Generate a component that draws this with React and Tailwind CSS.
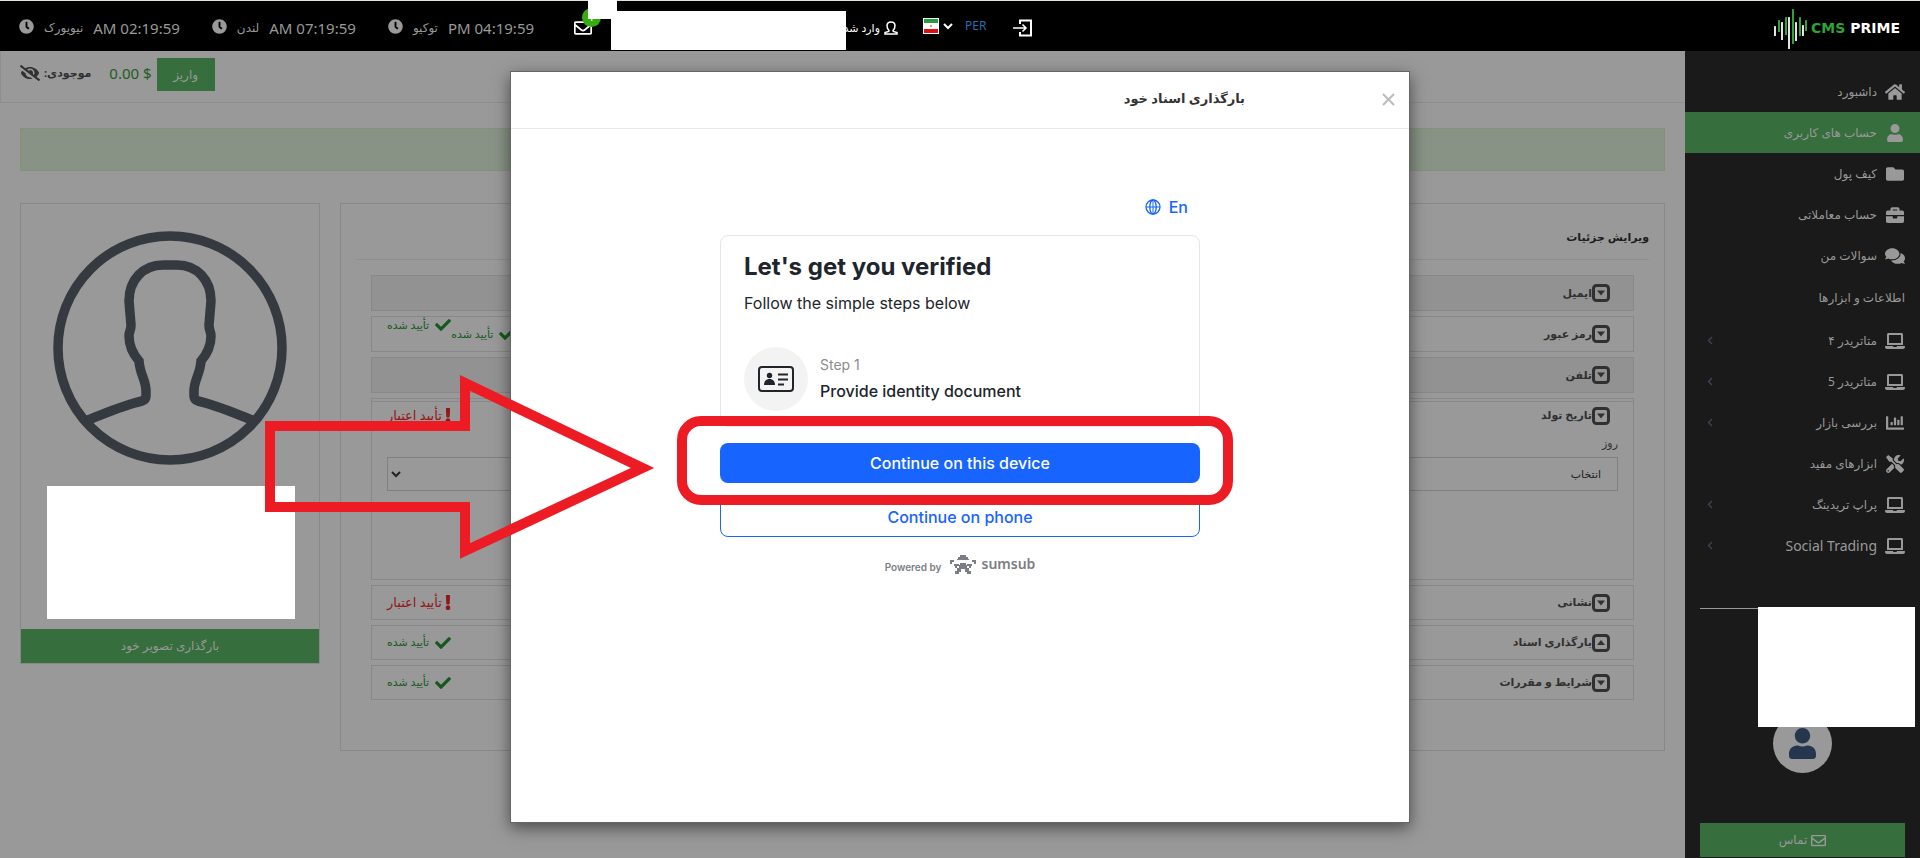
import React from "react";
import {
  FaClock, FaHome, FaUser, FaFolder, FaBriefcase, FaComments, FaLaptop, FaChartBar, FaTools,
  FaEyeSlash, FaCheck, FaExclamation, FaRegEnvelope, FaChevronLeft,
} from "react-icons/fa";

const clocks = [
  { city: "نیویورک", time: "AM 02:19:59" },
  { city: "لندن", time: "AM 07:19:59" },
  { city: "توکیو", time: "PM 04:19:59" },
];

const mainLinks = [
  { label: "داشبورد", Icon: FaHome },
  { label: "حساب های کاربری", Icon: FaUser, active: true },
  { label: "کیف پول", Icon: FaFolder },
  { label: "حساب معاملاتی", Icon: FaBriefcase },
  { label: "سوالات من", Icon: FaComments },
];

const toolLinks = [
  { label: "متاتریدر ۴", Icon: FaLaptop, more: true },
  { label: "متاتریدر 5", Icon: FaLaptop, more: true },
  { label: "بررسی بازار", Icon: FaChartBar, more: true },
  { label: "ابزارهای مفید", Icon: FaTools },
  { label: "پراپ تریدینگ", Icon: FaLaptop, more: true },
  { label: "Social Trading", Icon: FaLaptop, more: true, latin: true },
];

function Chevron({ className }) {
  return (
    <svg className={className} viewBox="0 0 10 7" fill="none" stroke="currentColor" strokeWidth="2">
      <path d="M1 1l4 4 4-4" />
    </svg>
  );
}

function CaretBox({ up }) {
  return (
    <svg className="h-[18px] w-[18px] shrink-0" viewBox="0 0 18 18">
      <rect x="1.5" y="1.5" width="15" height="15" rx="3" fill="none" stroke="currentColor" strokeWidth="3" />
      <path d={up ? "M5 11h8L9 6z" : "M5 6.500h8L9 11.500z"} fill="currentColor" />
    </svg>
  );
}

function Logo() {
  const bars = [
    [0, 26, 36, 0], [4, 20, 32, 1], [7, 22, 40, 0], [11, 17, 35, 1], [14, 17, 49, 0],
    [18, 9, 44, 1], [21, 22, 41, 0], [25, 17, 36, 1], [28, 25, 36, 0], [31, 20, 31, 1],
  ];
  return (
    <a href="#home" className="ml-auto mr-5 flex items-center gap-1" aria-label="CMS PRIME">
      <svg className="h-[50px] w-[33px]" viewBox="0 3 33 50">
        {bars.map(([x, a, b, green]) => (
          <rect key={x} x={x} y={a} width="2" height={b - a} rx="0.5" fill={green ? "#2fa336" : "#e4e4e4"} />
        ))}
      </svg>
      <span className="font-['DejaVu_Sans',sans-serif] text-sm font-bold text-[#2fa336]">
        CMS <span className="text-white">PRIME</span>
      </span>
    </a>
  );
}

function Header() {
  return (
    <header className="relative flex h-[51px] items-center border-t border-[#e5e2d8] bg-black pt-1">
      <div className="flex w-[574px] shrink-0 gap-8 pl-[19px] text-[#999]">
        {clocks.map((c) => (
          <div key={c.city} className="flex items-center gap-[10px]">
            <FaClock className="mb-1 h-[15px] w-[15px]" />
            <span dir="rtl" className="text-xs">{c.city}</span>
            <span className="text-[15px]">{c.time}</span>
          </div>
        ))}
      </div>
      <a href="#inbox" aria-label="Inbox" className="relative text-white">
        <FaRegEnvelope className="h-[18px] w-[18px]" />
        <span className="absolute -top-[11px] left-2 flex h-[19px] w-[19px] items-center justify-center rounded-full bg-[#37ab10] text-[11px]">1</span>
      </a>
      <a href="#account" dir="rtl" className="flex w-[306px] items-center gap-1 text-[11px] text-white">
        <svg className="h-[14px] w-[14px]" viewBox="0 0 14 14" fill="none" stroke="currentColor" strokeWidth="1.500">
          <path d="M5 9.500C3.500 8 3 6.500 3 4.800 3 2.500 4.700 1 7 1s4 1.500 4 3.800c0 1.700-.5 3.200-2 4.700l.3 1 3.700 1V13H1v-1.500l3.700-1z" />
        </svg>
        وارد شده به عنوان
      </a>
      <button type="button" aria-label="Language" className="ml-[25px] flex items-center gap-1 pb-1 text-white">
        <svg className="h-4 w-4" viewBox="0 0 16 16">
          <rect width="16" height="16" fill="#fff" />
          <rect x="1" y="1" width="14" height="4" fill="#259a3e" />
          <rect x="1" y="11" width="14" height="4" fill="#dc1010" />
          <path d="M7 7h2v2H7z" fill="#e88" />
        </svg>
        <Chevron className="h-[7px] w-[10px]" />
      </button>
      <a href="#per" className="ml-3 pb-1 text-xs text-[#2b6cad]">PER</a>
      <button type="button" aria-label="Log out" className="ml-[27px] text-white">
        <svg className="h-[18px] w-[19px]" viewBox="0 0 19 18" fill="none" stroke="currentColor" strokeWidth="2">
          <path d="M7 5V1.500h11v15H7V13" />
          <path d="M0 9h12M9.500 5.500L13 9l-3.500 3.500" strokeWidth="1.500" />
        </svg>
      </button>
      <Logo />
      <div className="absolute -top-px left-[588px] h-[19px] w-[29px] bg-white" />
      <div className="absolute left-[611px] top-[10px] h-[39px] w-[235px] bg-white" />
    </header>
  );
}

function NavLink({ label, Icon, active, more, latin }) {
  return (
    <li>
      <a
        href="#nav"
        className={`flex h-[41px] items-center gap-2 pl-[22px] pr-[15px] text-[#999] ${active ? "bg-[#366e3d]" : ""}`}
      >
        <Icon className={`w-5 ${Icon === FaLaptop ? "h-5" : "h-[18px]"}`} />
        <span className={latin ? "text-sm" : "text-xs"}>{label}</span>
        {more && <FaChevronLeft className="mr-auto h-[9px] w-[6px] text-[#3c4454]" />}
      </a>
    </li>
  );
}

function Sidebar() {
  return (
    <aside dir="rtl" className="relative flex w-[235px] shrink-0 flex-col bg-[#1a1a1a] pt-5">
      <ul>{mainLinks.map((l) => <NavLink key={l.label} {...l} />)}</ul>
      <h2 className="flex h-11 items-center pr-[15px] text-xs text-[#999]">اطلاعات و ابزارها</h2>
      <ul>{toolLinks.map((l) => <NavLink key={l.label} {...l} />)}</ul>
      <hr className="mx-[15px] mt-[42px] border-[#999]" />
      <div className="mx-auto mt-[105px] flex h-[59px] w-[59px] items-center justify-center rounded-full bg-[#999]">
        <FaUser className="h-[31px] w-[27px] text-[#25364f]" />
      </div>
      <button type="button" className="mx-[15px] mb-px mt-auto flex h-[34px] items-center justify-center gap-1 bg-[#366e3d] text-xs text-[#999]">
        <FaRegEnvelope className="h-[15px] w-[15px]" />
        تماس
      </button>
      <div className="absolute right-[5px] top-[556px] h-[120px] w-[157px] bg-white" />
    </aside>
  );
}

function Verified() {
  return (
    <span className="flex items-center gap-[6px] text-[11px] text-[#155a1c]">
      <FaCheck className="h-4 w-4" />
      تأیید شده
    </span>
  );
}

function Needed() {
  return (
    <span className="flex items-center gap-[3px] text-[13px] text-[#931717]">
      <FaExclamation className="h-[15px] w-[6px]" />
      تأیید اعتبار
    </span>
  );
}

function RowTitle({ children, up }) {
  return (
    <h3 className="flex items-center text-[11px] font-bold text-[#303030]">
      <CaretBox up={up} />
      {children}
    </h3>
  );
}

function Details() {
  const row = "flex items-center justify-between border border-[#888] pl-[15px] pr-[23px]";
  return (
    <section dir="rtl" className="grow border border-[#888] px-[15px] pb-[50px]">
      <h2 className="flex h-14 items-center border-b border-[#8e8e8e] pt-3 text-[11px] font-bold text-[#1c1c1c]">
        ویرایش جزئیات
      </h2>
      <div className="mx-[15px] mt-[15px] flex flex-col gap-[5px]">
        <div className={`${row} h-9 bg-[#929292]`}><RowTitle>ایمیل</RowTitle></div>
        <div className={`${row} h-9`}>
          <RowTitle>رمز عبور</RowTitle>
          <div className="flex h-full items-center">
            <Verified />
            <span className="self-start"><Verified /></span>
          </div>
        </div>
        <div className={`${row} h-9 bg-[#929292]`}><RowTitle>تلفن</RowTitle></div>
        <div className="border border-[#888] pb-[88px] pt-0.5">
          <div className="flex h-7 items-center justify-between border-t border-[#888] pl-[15px] pr-[23px]">
            <RowTitle>تاریخ تولد</RowTitle>
            <Needed />
          </div>
          <div className="px-[15px]">
            <label htmlFor="day" className="flex h-7 items-center text-[11px] text-[#303030]">روز</label>
            <div className="relative">
              <select id="day" className="block h-[34px] w-full appearance-none border border-[#808080] bg-transparent px-4 text-[11px] text-[#222]">
                <option>انتخاب</option>
              </select>
              <Chevron className="pointer-events-none absolute left-1 top-[14px] h-[7px] w-[10px] text-[#222]" />
            </div>
          </div>
        </div>
        <div className={`${row} h-[35px]`}><RowTitle>نشانی</RowTitle><Needed /></div>
        <div className={`${row} h-[35px]`}><RowTitle up>بارگذاری اسناد</RowTitle><Verified /></div>
        <div className={`${row} h-[35px]`}><RowTitle>شرایط و مقررات</RowTitle><Verified /></div>
      </div>
    </section>
  );
}

function ProfileCard() {
  const half =
    "M117 34h-7C90 34 76 49 76 70l2 24c0 6-2 6-2 11 0 10 4 18 10 25 1 14 7 19 7 30v5c0 3-1 4-4 5-18 4-36 12-54 19";
  return (
    <section className="w-[300px] shrink-0 border border-[#888]">
      <svg className="mx-auto mt-[27px] h-[234px] w-[234px]" viewBox="0 0 234 234" fill="none" stroke="#353a41" strokeWidth="9.500">
        <circle cx="117" cy="117" r="112" />
        <path d={half} />
        <path d={half} transform="matrix(-1 0 0 1 234 0)" />
      </svg>
      <div className="ml-[26px] mt-[21px] h-[133px] w-[248px] bg-white" />
      <button type="button" dir="rtl" className="mt-[10px] block h-[34px] w-full bg-[#366e3d] text-xs text-[#999]">
        بارگذاری تصویر خود
      </button>
    </section>
  );
}

function Modal() {
  return (
    <div className="absolute inset-x-0 top-[71px] flex justify-center">
      <div role="dialog" aria-labelledby="modal-title" className="min-h-[752px] w-[900px] border border-[#666] bg-white shadow-[0_5px_15px_rgba(0,0,0,0.5)]">
        <div dir="rtl" className="flex h-[57px] items-center border-b border-[#e8e8e8] pb-0.5 pr-[14px]">
          <button type="button" aria-label="Close" className="text-[#bbb]">
            <svg className="h-[13px] w-[13px]" viewBox="0 0 13 13" stroke="currentColor" strokeWidth="2">
              <path d="M1 1l11 11M12 1L1 12" />
            </svg>
          </button>
          <h2 id="modal-title" className="mr-[137px] text-[13px] font-bold text-[#333]">بارگذاری اسناد خود</h2>
        </div>
        <div className="mx-auto w-[480px] pt-[66px] font-[Inter,sans-serif] text-[#20252c]">
          <button type="button" className="ml-auto mr-3 flex h-6 items-center gap-2 font-medium text-[#1764ff]">
            <svg className="h-4 w-4" viewBox="0 0 16 16" fill="none" stroke="currentColor" strokeWidth="1.300">
              <circle cx="8" cy="8" r="7" />
              <ellipse cx="8" cy="8" rx="3.200" ry="7" />
              <path d="M1 8h14M8 1v14" strokeWidth="1" />
            </svg>
            En
          </button>
          <div className="mt-4 rounded-lg border border-[#e6e6e6] px-[23px] pb-[15px] pt-4">
            <h3 className="text-2xl leading-[30px] font-bold">Let's get you verified</h3>
            <p className="mt-[9px] leading-6">Follow the simple steps below</p>
            <div className="mt-8 flex items-center gap-3">
              <div className="flex h-16 w-16 items-center justify-center rounded-full bg-[#f3f3f3]">
                <svg className="h-[26px] w-9" viewBox="0 0 36 26" fill="none" stroke="currentColor" strokeWidth="2">
                  <rect x="1" y="1" width="34" height="24" rx="3" />
                  <circle cx="11.500" cy="9.500" r="2.700" fill="currentColor" stroke="none" />
                  <path d="M6 19c0-4 2.500-6 5.500-6s5.500 2 5.500 6z" fill="currentColor" stroke="none" />
                  <path d="M20 8.500h10M20 13.500h10M20 18.500h6" />
                </svg>
              </div>
              <div>
                <p className="text-sm leading-5 text-[#8c8c8c]">Step 1</p>
                <p className="mt-1 leading-6 font-medium">Provide identity document</p>
              </div>
            </div>
          </div>
          <button type="button" className="mt-4 block h-10 w-full rounded-lg bg-[#1764ff] font-medium text-white">Continue on this device</button>
          <button type="button" className="mt-[14px] block h-10 w-full rounded-lg border border-[#1764ff] font-medium text-[#1764ff]">Continue on phone</button>
          <p className="mt-[17px] flex items-end justify-center gap-[9px] text-[10px] leading-[14px] font-semibold text-[#7b7e85]">
            Powered by
            <span className="flex items-center gap-[5px] font-['Noto_Sans',sans-serif] text-sm leading-5">
              <svg className="h-[19px] w-[26px]" viewBox="0 0 26 19" fill="#7b7e85">
                <path d="M10 0h6v2h2v2h1v1H7V4h1V2h2zM0 5h4v2H2v2H0zM22 5h4v4h-2V7h-2zM4 9h5v2H7v2H5v-2H4zM17 9h5v2h-1v2h-2v-2h-2zM10 8h6v2h1v3h2v3h2v3h-4v-2h-2v-3h-4v3H9v2H5v-3h2v-3h2v-3h1z" />
              </svg>
              sumsub
            </span>
          </p>
        </div>
      </div>
    </div>
  );
}

export default function App() {
  return (
    <div className="relative flex min-h-screen flex-col overflow-x-hidden bg-[#999] font-['Noto_Sans','DejaVu_Sans',sans-serif]">
      <Header />
      <div className="flex grow">
        <main className="grow">
          <div className="flex h-[52px] items-start border-b border-l border-[#8e8e8e] pl-[19px] pt-[7px]">
            <div className="flex h-[30px] items-center">
              <FaEyeSlash className="h-5 w-5 text-[#303030]" />
              <span dir="rtl" className="ml-1 text-[11px] font-bold text-[#303030]">موجودی:</span>
              <span className="ml-[18px] text-[15px] text-[#1d5d22]">0.00 $</span>
            </div>
            <button type="button" className="ml-[5px] h-[33px] w-[58px] bg-[#366e3d] text-xs text-[#999]">واریز</button>
          </div>
          <div role="alert" className="mx-5 mt-[25px] h-[43px] border border-[#849078] bg-[#889285]" />
          <div className="mx-5 mt-8 flex items-start gap-5">
            <ProfileCard />
            <Details />
          </div>
        </main>
        <Sidebar />
      </div>
      <Modal />
      <svg className="pointer-events-none absolute left-[260px] top-[370px] h-[196px] w-[400px]" viewBox="260 370 400 196" fill="none" stroke="#ed1c24" strokeWidth="10">
        <path strokeMiterlimit="10" d="M270 426H465V383L642.500 468 465 551V507H270z" />
      </svg>
      <div className="pointer-events-none absolute inset-x-0 top-[416px] flex justify-center pr-[10px]">
        <div className="h-[89px] w-[556px] rounded-[24px] border-10 border-[#ed1c24]" />
      </div>
    </div>
  );
}
